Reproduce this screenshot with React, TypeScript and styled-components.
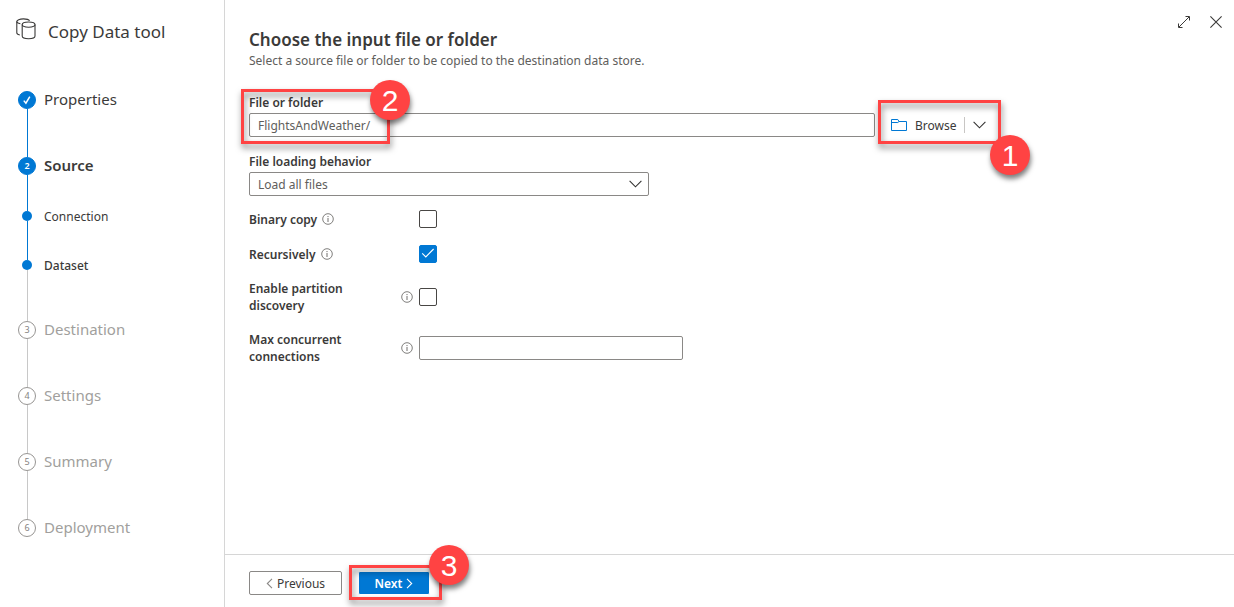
import React from "react";
import styled, { createGlobalStyle, css } from "styled-components";

const BLUE = "#0078d4";
const RED = "#ff4343";

const GlobalStyle = createGlobalStyle`
  *, *::before, *::after { box-sizing: border-box; }
  body {
    margin: 0;
    background: #fff;
    color: #3b3a39;
    font-family: "Noto Sans", "Open Sans", sans-serif;
    font-size: 12px;
    line-height: 17px;
  }
  button, input, select { font: inherit; color: inherit; margin: 0; }
`;

const Page = styled.div`
  display: flex;
  min-height: 100vh;
`;

const Sidebar = styled.aside`
  flex: 0 0 225px;
  border-right: 1px solid #d6d6d6;
  padding: 18px 16px;
`;

const Brand = styled.div`
  display: flex;
  gap: 11px;
  height: 73px;
`;

const BrandName = styled.h1`
  margin: 0;
  padding-top: 2px;
  font-size: 17px;
  font-weight: 400;
  line-height: 24px;
`;

const Steps = styled.ol`
  list-style: none;
  margin: 0;
  padding: 0 0 0 2px;
`;

const StepItem = styled.li<{ $short: boolean }>`
  display: flex;
  gap: 8px;
  min-height: ${(p) => (p.$short ? 49 : 66)}px;

  &:last-child { min-height: 18px; }
`;

const Rail = styled.div`
  flex: 0 0 18px;
  display: flex;
  flex-direction: column;
  align-items: center;
`;

const Line = styled.span<{ $done: boolean; $lead?: boolean }>`
  width: 1px;
  flex: ${(p) => (p.$lead ? "0 0 5px" : "1")};
  background: ${(p) => (p.$done ? BLUE : "#c8c8c8")};
`;

const Marker = styled.span<{ $filled: boolean }>`
  flex: 0 0 18px;
  width: 18px;
  display: flex;
  align-items: center;
  justify-content: center;
  border-radius: 50%;
  border: 1px solid ${(p) => (p.$filled ? BLUE : "#979593")};
  background: ${(p) => (p.$filled ? BLUE : "#fff")};
  color: ${(p) => (p.$filled ? "#fff" : "#858382")};
  font-size: 9px;
  font-weight: ${(p) => (p.$filled ? 600 : 400)};
  line-height: 16px;
`;

const Dot = styled.span`
  flex: 0 0 10px;
  width: 10px;
  border-radius: 50%;
  background: ${BLUE};
`;

const StepLabel = styled.span<{ $tone: string; $sub: boolean }>`
  font-size: ${(p) => (p.$sub ? 12 : 15)}px;
  line-height: ${(p) => (p.$sub ? 22 : 16)}px;
  color: ${(p) => (p.$tone === "todo" ? "#a19f9d" : "#3b3a39")};
  font-weight: ${(p) => (p.$tone === "current" ? (p.$sub ? 500 : 600) : 400)};
`;

const Main = styled.main`
  flex: 1;
  min-width: 0;
  display: flex;
  flex-direction: column;
`;

const Header = styled.header`
  display: flex;
  justify-content: space-between;
  padding: 10px 6px 0 24px;
`;

const Heading = styled.div`
  padding-top: 18px;
`;

const Title = styled.h2`
  margin: 0;
  font-size: 17px;
  font-weight: 600;
  line-height: 24px;
`;

const Subtitle = styled.p`
  margin: 0;
  color: #605e5c;
  line-height: 18px;
`;

const WindowActions = styled.div`
  display: flex;
  gap: 8px;
`;

const IconButton = styled.button`
  display: flex;
  align-items: center;
  justify-content: center;
  width: 24px;
  height: 24px;
  padding: 0;
  border: 0;
  background: none;
`;

const Form = styled.form`
  flex: 1;
  padding: 24px 24px 0;
`;

const Field = styled.div`
  position: relative;
  display: flex;
  flex-direction: column;
  gap: 2px;
  margin-bottom: 16px;
`;

const label = css`
  font-weight: 600;
  line-height: 17px;
`;

const FieldLabel = styled.label`
  ${label}
`;

const InputRow = styled.div`
  display: flex;
  gap: 8px;
`;

const TextBox = styled.input<{ $width: number }>`
  flex: 0 1 ${(p) => p.$width}px;
  min-width: 0;
  height: 24px;
  padding: 0 8px;
  border: 1px solid #8a8886;
  border-radius: 2px;
  background: #fff;
  color: #605e5c;
`;

const SelectWrap = styled.div`
  display: grid;
  max-width: 400px;
  align-items: center;

  > * { grid-area: 1 / 1; }
  > svg { justify-self: end; margin-right: 7px; pointer-events: none; }
`;

const Select = styled.select`
  appearance: none;
  height: 24px;
  padding: 1px 28px 0 8px;
  border: 1px solid #8a8886;
  border-radius: 2px;
  background: #fff;
  color: #605e5c;
`;

const SplitButton = styled.div`
  position: relative;
  display: flex;
  align-items: center;
`;

const SplitPart = styled.button`
  display: flex;
  align-items: center;
  gap: 8px;
  height: 24px;
  padding: 0 8px;
  border: 0;
  background: none;
`;

const Divider = styled.span`
  width: 1px;
  height: 16px;
  background: #c8c6c4;
`;

const Options = styled.div`
  display: flex;
  flex-direction: column;
  gap: 17px;
  margin-top: -2px;
`;

const OptionRow = styled.div`
  display: flex;
  align-items: center;
  min-height: 18px;
`;

const OptionLabel = styled.label`
  ${label}
  flex: 0 0 170px;
  display: flex;
  align-items: center;
  gap: 5px;
  padding-right: 6px;

  > svg { flex: none; }
`;

const CheckWrap = styled.span`
  display: grid;
  place-items: center;

  > * { grid-area: 1 / 1; }
  > svg { pointer-events: none; }
`;

const CheckBox = styled.input`
  appearance: none;
  width: 18px;
  height: 18px;
  border: 1px solid #484644;
  border-radius: 2px;
  background: #fff;

  &:checked { background: ${BLUE}; border-color: ${BLUE}; }
`;

const Footer = styled.footer`
  display: flex;
  gap: 16px;
  padding: 16px 24px 12px;
  border-top: 1px solid #d6d6d6;
`;

const NavButton = styled.button<{ $primary?: boolean }>`
  display: flex;
  align-items: center;
  justify-content: center;
  gap: 4px;
  height: 24px;
  min-width: ${(p) => (p.$primary ? 72 : 93)}px;
  padding: 0 15px;
  border: 1px solid ${(p) => (p.$primary ? "#fff" : "#8a8886")};
  border-radius: 2px;
  background: ${(p) => (p.$primary ? BLUE : "#fff")};
  color: ${(p) => (p.$primary ? "#fff" : "#3b3a39")};
  font-weight: ${(p) => (p.$primary ? 600 : 400)};
`;

const NavSlot = styled.div`
  position: relative;
`;

type Box = { top: number; left: number; width: number; height: number };
type Spot = { x: number; y: number };

const Frame = styled.span<{ $box: Box }>`
  position: absolute;
  top: ${(p) => p.$box.top}px;
  left: ${(p) => p.$box.left}px;
  width: ${(p) => p.$box.width}px;
  height: ${(p) => p.$box.height}px;
  border: 3px solid ${RED};
  filter: drop-shadow(1px 4px 3px rgba(0, 0, 0, 0.5));
  pointer-events: none;
`;

const Badge = styled.span<{ $at: Spot }>`
  position: absolute;
  left: ${(p) => p.$at.x - 20}px;
  top: ${(p) => p.$at.y - 20}px;
  width: 40px;
  height: 40px;
  border-radius: 50%;
  background: ${RED};
  box-shadow: 1px 4px 5px rgba(0, 0, 0, 0.5);
  color: #fff;
  font-family: "Liberation Sans", Arial, sans-serif;
  font-size: 30px;
  line-height: 42px;
  text-align: center;
  pointer-events: none;
`;

function Callout({ n, box, at }: { n: number; box: Box; at: Spot }) {
  return (
    <>
      <Frame $box={box} />
      <Badge $at={at}>{n}</Badge>
    </>
  );
}

const DataIcon = () => (
  <svg width="21" height="22" viewBox="0 0 21 22" fill="none" stroke="#3b3a39" strokeWidth="1.1">
    <ellipse cx="12.6" cy="6.6" rx="6.4" ry="2.6" />
    <path d="M6.2 6.6v11.4c0 1.6 2.8 2.7 6.4 2.7s6.4-1.1 6.4-2.7V6.6" />
    <path d="M13.6 2.8C12.8 1.6 10.600.9 7.400.9 3.600.9.8 2 .8 3.500v11.200c0 1 1 1.800 3 2.300" />
    <path d="M.8 3.500c0 1 1.400 1.800 3.600 2.200" />
  </svg>
);

const Chevron = () => (
  <svg width="13" height="8" viewBox="0 0 13 8" fill="none" stroke="#323130" strokeWidth="1.1">
    <path d="M.6.900l5.900 5.900L12.400.9" />
  </svg>
);

const SideChevron = ({ next, color }: { next?: boolean; color: string }) => (
  <svg width="7" height="11" viewBox="0 0 7 11" fill="none" stroke={color} strokeWidth="1.1">
    <path d={next ? "M1 .8l4.700 4.700L1 10.200" : "M6 .8L1.300 5.500 6 10.200"} />
  </svg>
);

const Info = () => (
  <svg width="12" height="12" viewBox="0 0 12 12" fill="none" stroke="#605e5c">
    <circle cx="6" cy="6" r="5.300" strokeWidth="0.8" />
    <path d="M6 5v4M6 3v1.100" strokeWidth="0.9" />
  </svg>
);

const Folder = () => (
  <svg width="16" height="12" viewBox="0 0 16 12" fill="none" stroke={BLUE}>
    <path d="M.5 11.500V.5h6.300l1.200 2h7.500v9z" />
    <path d="M.5 3.500h6.300L8 2.500" />
  </svg>
);

const StepTick = () => (
  <svg width="10" height="10" viewBox="0 0 10 10" fill="none" stroke="#fff" strokeWidth="1.500">
    <path d="M1.800 5.600l2.100 2.600L7.800 1.600" />
  </svg>
);

const BoxTick = () => (
  <svg width="14" height="14" viewBox="0 0 14 14" fill="none" stroke="#fff" strokeWidth="1.100">
    <path d="M1.200 6.300l3.600 3.600L12.600 2" />
  </svg>
);

const Expand = () => (
  <svg width="12" height="12" viewBox="0 0 12 12" fill="none" stroke="#3b3a39">
    <path d="M1 11L11 1M7.500.5h4v4M.5 7.500v4h4" />
  </svg>
);

const Close = () => (
  <svg width="12" height="12" viewBox="0 0 12 12" fill="none" stroke="#3b3a39" strokeWidth="1.100">
    <path d="M.4.4l11.200 11.200M11.600.4L.4 11.600" />
  </svg>
);

type Step = { label: string; tone: "done" | "current" | "todo"; n?: number; sub?: boolean; short?: boolean };

const steps: Step[] = [
  { label: "Properties", tone: "done", n: 1 },
  { label: "Source", tone: "current", n: 2, short: true },
  { label: "Connection", tone: "done", sub: true, short: true },
  { label: "Dataset", tone: "current", sub: true },
  { label: "Destination", tone: "todo", n: 3 },
  { label: "Settings", tone: "todo", n: 4 },
  { label: "Summary", tone: "todo", n: 5 },
  { label: "Deployment", tone: "todo", n: 6 },
];

function StepEntry({ step, last }: { step: Step; last: boolean }) {
  const lineDone = step.tone !== "todo" && step.label !== "Dataset";
  return (
    <StepItem $short={!!step.short}>
      <Rail>
        {step.sub ? (
          <>
            <Line $done $lead />
            <Dot />
          </>
        ) : (
          <Marker $filled={step.tone !== "todo"}>
            {step.tone === "done" ? <StepTick /> : step.n}
          </Marker>
        )}
        {!last && <Line $done={lineDone} />}
      </Rail>
      <StepLabel $tone={step.tone} $sub={!!step.sub}>
        {step.label}
      </StepLabel>
    </StepItem>
  );
}

function CheckOption({ id, text, checked }: { id: string; text: string; checked?: boolean }) {
  const [on, setOn] = React.useState(!!checked);
  return (
    <OptionRow>
      <OptionLabel htmlFor={id}>
        {text}
        <Info />
      </OptionLabel>
      <CheckWrap>
        <CheckBox id={id} type="checkbox" checked={on} onChange={() => setOn(!on)} />
        {on && <BoxTick />}
      </CheckWrap>
    </OptionRow>
  );
}

export default function App() {
  return (
    <>
      <GlobalStyle />
      <Page>
        <Sidebar>
          <Brand>
            <DataIcon />
            <BrandName>Copy Data tool</BrandName>
          </Brand>
          <Steps>
            {steps.map((s, i) => (
              <StepEntry key={s.label} step={s} last={i === steps.length - 1} />
            ))}
          </Steps>
        </Sidebar>
        <Main>
          <Header>
            <Heading>
              <Title>Choose the input file or folder</Title>
              <Subtitle>Select a source file or folder to be copied to the destination data store.</Subtitle>
            </Heading>
            <WindowActions>
              <IconButton type="button" aria-label="Expand">
                <Expand />
              </IconButton>
              <IconButton type="button" aria-label="Close">
                <Close />
              </IconButton>
            </WindowActions>
          </Header>
          <Form>
            <Field>
              <FieldLabel htmlFor="path">File or folder</FieldLabel>
              <InputRow>
                <TextBox id="path" type="text" defaultValue="FlightsAndWeather/" $width={626} />
                <SplitButton>
                  <SplitPart type="button">
                    <Folder />
                    Browse
                  </SplitPart>
                  <Divider />
                  <SplitPart type="button" aria-label="More browse options">
                    <Chevron />
                  </SplitPart>
                  <Callout n={1} box={{ top: -13, left: -5, width: 123, height: 44 }} at={{ x: 127, y: 42 }} />
                </SplitButton>
              </InputRow>
              <Callout n={2} box={{ top: -5, left: -8, width: 149, height: 55 }} at={{ x: 141, y: 6 }} />
            </Field>
            <Field>
              <FieldLabel htmlFor="behavior">File loading behavior</FieldLabel>
              <SelectWrap>
                <Select id="behavior" defaultValue="all">
                  <option value="all">Load all files</option>
                </Select>
                <Chevron />
              </SelectWrap>
            </Field>
            <Options>
              <CheckOption id="binary" text="Binary copy" />
              <CheckOption id="recursive" text="Recursively" checked />
              <CheckOption id="partition" text="Enable partition discovery" />
              <OptionRow>
                <OptionLabel htmlFor="max">
                  Max concurrent connections
                  <Info />
                </OptionLabel>
                <TextBox id="max" type="text" $width={264} />
              </OptionRow>
            </Options>
          </Form>
          <Footer>
            <NavButton type="button">
              <SideChevron color="#8a8886" />
              Previous
            </NavButton>
            <NavSlot>
              <NavButton type="button" $primary>
                Next
                <SideChevron next color="#fff" />
              </NavButton>
              <Callout n={3} box={{ top: -6, left: -9, width: 93, height: 35 }} at={{ x: 91, y: -6 }} />
            </NavSlot>
          </Footer>
        </Main>
      </Page>
    </>
  );
}
